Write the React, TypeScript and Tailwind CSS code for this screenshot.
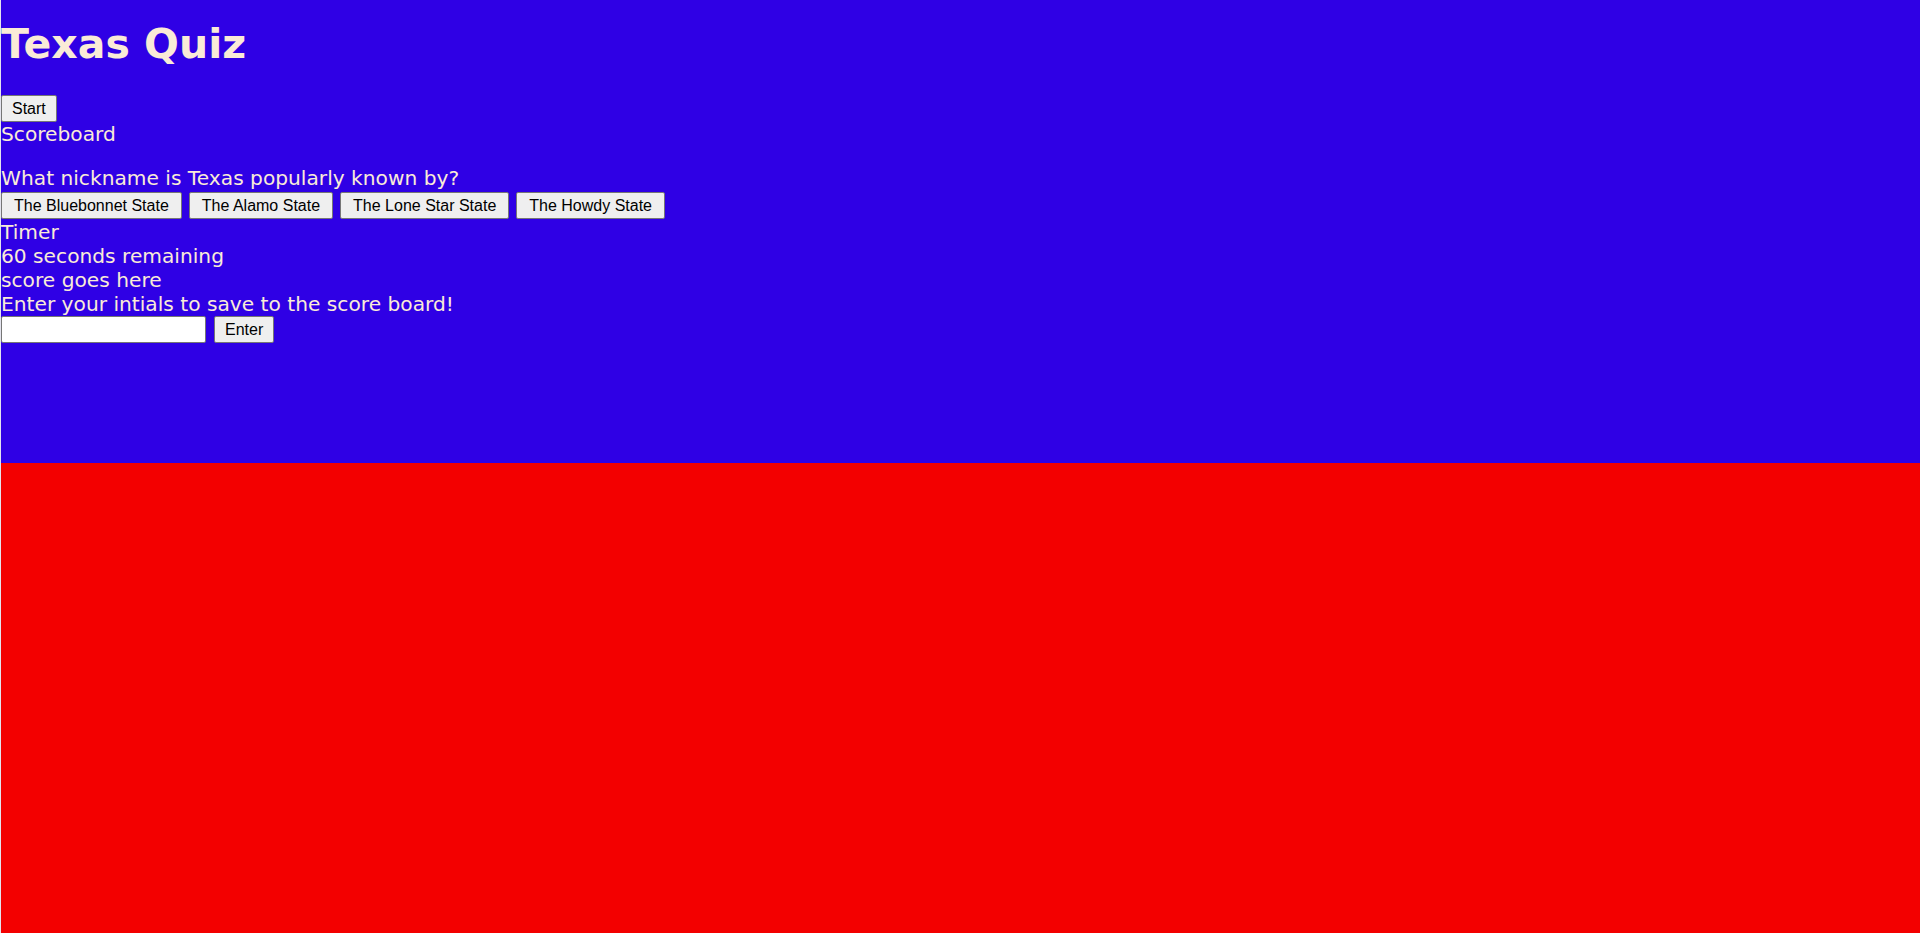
import React from "react";

const base =
  "h-[27px] bg-[#efefef] border border-[#767676] rounded-[2px] text-black text-[16px] leading-[18px] font-['Liberation_Sans',Arial,sans-serif]";
const btn = base + " px-[10px]";
const ansBtn = base + " px-[12px]";

export default function App() {
  return (
    <div className="w-[1920px] h-[933px] flex border-l border-[#e4e4ee] overflow-hidden">
      <div className="flex-1 flex flex-col">
        <div className="h-[463px] bg-[#2f00e5] text-[#faebd7] font-['DejaVu_Sans','Verdana',sans-serif] text-[20.2px] leading-[24px]">
          <h1 className="mt-[20px] text-[41px] leading-[48px] font-bold">Texas Quiz</h1>
          <div className="mt-[27px] flex">
            <button className={btn}>Start</button>
          </div>
          <div>Scoreboard</div>
          <div className="mt-[20px]">What nickname is Texas popularly known by?</div>
          <div className="mt-[2px] flex gap-[7px]">
            <button className={ansBtn}>The Bluebonnet State</button>
            <button className={ansBtn}>The Alamo State</button>
            <button className={ansBtn}>The Lone Star State</button>
            <button className={ansBtn}>The Howdy State</button>
          </div>
          <div className="mt-[1px]">Timer</div>
          <div>60 seconds remaining</div>
          <div>score goes here</div>
          <div>Enter your intials to save to the score board!</div>
          <div className="flex gap-[8px]">
            <input
              type="text"
              className="w-[205px] h-[27px] bg-white border border-[#767676] rounded-[2px] text-black text-[16px] px-[2px] outline-none"
            />
            <button className={btn}>Enter</button>
          </div>
        </div>
        <div className="flex-1 bg-[#f30000]" />
      </div>
    </div>
  );
}
